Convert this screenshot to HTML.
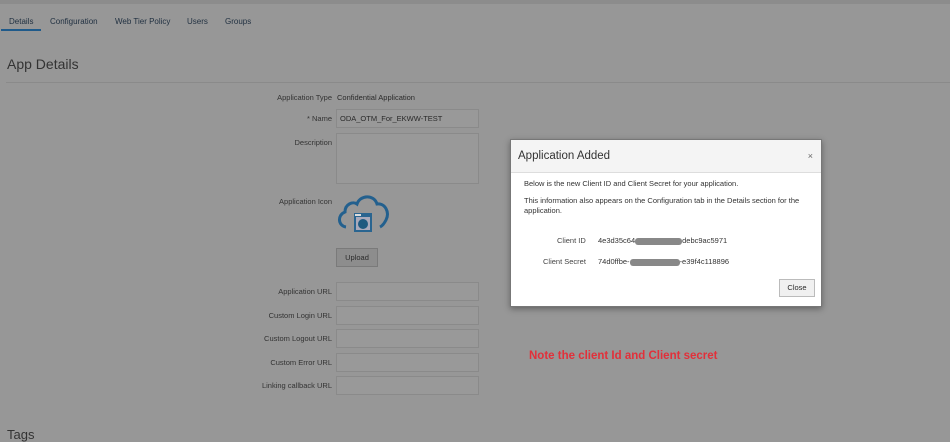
<!DOCTYPE html><html><head><style>
body{margin:0;width:950px;height:435px;overflow:hidden;background:#979797;font-family:"Liberation Sans",sans-serif;color:#2a2a2a;position:relative}
.a{position:absolute;white-space:nowrap}
.tab{font-size:8px;color:#1f2f40;top:17px}
.lbl{font-size:7.5px;color:#333;text-align:right;right:618px}
.in{position:absolute;left:336px;width:141px;height:17px;border:1px solid #8a8a8a;background:#999}
</style></head><body>
<div class="a" style="left:0;top:0;width:950px;height:4px;background:#8c8c8c"></div>
<div class="a tab" style="left:9px">Details</div>
<div class="a tab" style="left:50px">Configuration</div>
<div class="a tab" style="left:115px">Web Tier Policy</div>
<div class="a tab" style="left:187px">Users</div>
<div class="a tab" style="left:225px">Groups</div>
<div class="a" style="left:1px;top:29px;width:40px;height:2px;background:#1f5a8a"></div>
<div class="a" style="left:7px;top:56px;font-size:14px;color:#333">App Details</div>
<div class="a" style="left:6px;top:82px;width:944px;height:1px;background:#8a8a8a"></div>
<div class="a lbl" style="top:93px">Application Type</div>
<div class="a" style="left:337px;top:93px;font-size:7.5px">Confidential Application</div>
<div class="a lbl" style="top:114px">* Name</div>
<div class="in" style="top:109px"></div>
<div class="a" style="left:340px;top:114px;font-size:7.5px">ODA_OTM_For_EKWW-TEST</div>
<div class="a lbl" style="top:138px">Description</div>
<div class="in" style="top:133px;height:49px"></div>
<div class="a lbl" style="top:197px">Application Icon</div>
<svg class="a" style="left:336px;top:193px" width="55" height="46" viewBox="0 0 55 46">
<path d="M10 34 C2 33 1 22 9 19 C9 11 17 8 21 11 C24 2 38 1 41 11 C49 10 54 19 50 27 C48 31 46 33 44 34" fill="none" stroke="#23608e" stroke-width="3"/>
<rect x="18" y="20" width="18" height="19" fill="#2a6590"/><rect x="20" y="24" width="14" height="13" fill="#aab"/>
<circle cx="27" cy="31" r="5" fill="#1e5a80"/><rect x="19" y="21" width="6" height="2" fill="#ddd"/>
</svg>
<div class="a" style="left:336px;top:248px;width:40px;height:17px;background:#8d8d8d;border:1px solid #7a7a7a;font-size:7.5px;text-align:center;line-height:17px">Upload</div>
<div class="a lbl" style="top:287px">Application URL</div><div class="in" style="top:282px"></div>
<div class="a lbl" style="top:311px">Custom Login URL</div><div class="in" style="top:306px"></div>
<div class="a lbl" style="top:334px">Custom Logout URL</div><div class="in" style="top:329px"></div>
<div class="a lbl" style="top:358px">Custom Error URL</div><div class="in" style="top:353px"></div>
<div class="a lbl" style="top:381px">Linking callback URL</div><div class="in" style="top:376px"></div>
<div class="a" style="left:7px;top:427px;font-size:13px;color:#333">Tags</div>
<div class="a" style="left:529px;top:350px;font-size:11.5px;font-weight:bold;color:#e2303a">Note the client Id and Client secret</div>
<div class="a" style="left:510px;top:139px;width:310px;height:166px;background:#fff;border:1px solid #777;box-shadow:0 2px 6px rgba(0,0,0,.35)">
<div style="height:32px;background:#f4f4f4;border-bottom:1px solid #ddd;position:relative">
<div class="a" style="left:7px;top:10px;font-size:11.5px;color:#333">Application Added</div>
<div class="a" style="right:8px;top:11px;font-size:9px;color:#666">×</div></div>
<div class="a" style="left:13px;top:39px;font-size:7.5px;color:#333">Below is the new Client ID and Client Secret for your application.</div>
<div class="a" style="left:13px;top:56px;font-size:7.5px;color:#333;line-height:10px;white-space:normal;width:290px">This information also appears on the Configuration tab in the Details section for the application.</div>
<div class="a" style="left:46px;top:96px;font-size:7.5px;color:#444">Client ID</div>
<div class="a" style="left:87px;top:96px;font-size:7.5px;color:#333">4e3d35c64<span style="display:inline-block;width:47px;height:7px;background:#888;border-radius:3px;vertical-align:middle"></span>debc9ac5971</div>
<div class="a" style="left:32px;top:117px;font-size:7.5px;color:#444">Client Secret</div>
<div class="a" style="left:87px;top:117px;font-size:7.5px;color:#333">74d0ffbe-<span style="display:inline-block;width:50px;height:7px;background:#888;border-radius:3px;vertical-align:middle"></span>-e39f4c118896</div>
<div class="a" style="left:268px;top:139px;width:34px;height:16px;background:#f0f0f0;border:1px solid #bbb;font-size:7.5px;text-align:center;line-height:16px">Close</div>
</div>
</body></html>
